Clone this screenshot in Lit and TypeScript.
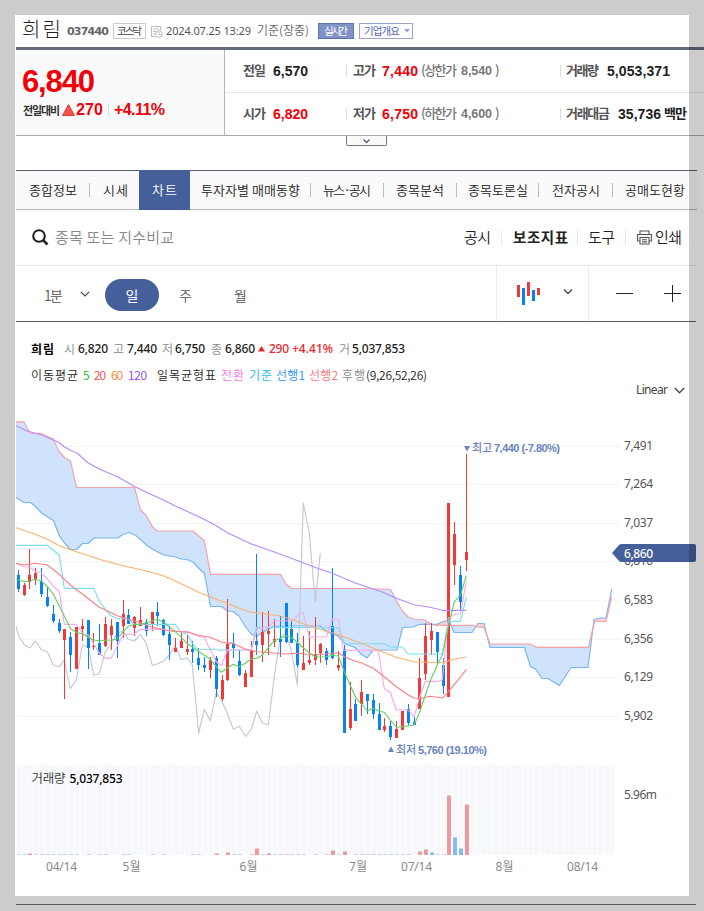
import { LitElement, html, svg, css } from "lit";
import { customElement } from "lit/decorators.js";

/** Text that spreads its letters over the width of its own box. */
@customElement("fit-text")
class FitText extends LitElement {
  static styles = css`
    :host { display: block; white-space: pre; min-width: 0; flex-shrink: 0; }
    .t { display: inline-block; }
  `;
  firstUpdated() {
    const span = this.renderRoot.querySelector(".t") as HTMLElement;
    const n = (this.textContent || "").length;
    if (n < 2) return;
    const natural = span.getBoundingClientRect().width;
    this.style.letterSpacing = (this.clientWidth - natural) / (n - 1) + "px";
  }
  render() {
    return html`<span class="t"><slot></slot></span>`;
  }
}

type Pt = [number, number];
/** Series are stored in thirds of a pixel; dx and dy move a run to its place on the page. */
const run = (dx: number, dy: number, s: string): Pt[] =>
  s.split(" ").map((p) => {
    const [x, y] = p.split(",").map(Number);
    return [(x + dx) / 3, (y + dy) / 3] as Pt;
  });
const pts = (a: Pt[]) => a.map((p) => p[0].toFixed(1) + "," + p[1].toFixed(1)).join(" ");
const px = (s: string): Pt[] => s.split(" ").map((p) => p.split(",").map(Number) as Pt);

const span2 = px(
  "16,421.8 24,421.8 30,433.5 41,433.5 53,439 59,451.5 65,458 70.5,461 76.5,487.5 134.5,487.5 140.5,510 146,515 152,526 157,531 193,531 204.5,541 210.5,574.3 280.5,574.3 286,584 291.5,588.5 361,588.5 390.5,589.3 396.5,601 402.5,611 408,617 414,619 425,620 431,624.5 436,625.3 474,625.3 476,627 484,627.5 490,644 530.5,644 536,647.3 588.5,647.3 594.5,621.5 606,621.5 611.7,597"
);
const span1 = px(
  "16,497.5 24,502.5 30.5,502.5 36,507 41.5,513 47,516.5 53.5,520.5 59.3,535.7 64.5,543 70.5,549.5 76.5,549.5 82.5,543.5 88,543.5 94,538 117.5,538 123,534.5 129,532.5 135,535 140,539 146.5,545 152,549 163.5,555 175.5,557 181,559 187,559.5 193,562 198.5,568 204.5,573.5 210.5,606.5 221.5,606.5 227.5,611 233,611.5 239,616 245,626 251,634 256.5,636.5 263,632 268,629.5 274,626.5 285,626 320,626 327,632 338,636 345,644 355,647.5 361,654 367,658 373,650.3 397,650 402.5,627.5 413.5,627 419.5,624.3 437,624.3 443,621.5 449,620 454,632.5 472,632.5 478,623.5 484,623.5 490,647.5 524.5,647.5 530.5,666.5 536,669.5 542,678.5 548,678.5 559.5,685.5 571,667.5 588,667.5 594,619.5 600,618 606,618 611.7,589"
);
const lagging = [
  ...run(0, 1560, "48,318 55,345 73,375 90,384 106,363 124,389 142,395 160,435 178,440 193,420 211,506 229,480 247,375 265,382 281,466 298,461 316,395 334,372 352,340 370,333 385,358 403,363 421,344 439,370 457,436 472,432 490,424 508,405 526,375 544,419 562,414 577,435 596,639 613,568 631,603 649,517 664,540 682,580 700,628"),
  ...run(690, 1440, "28,739 46,769 64,748 80,693 97,729 115,734 133,590 151,472 166,458 184,510 202,615 220,69 238,160 256,366 271,219"),
];
const ma5 = [
  ...run(0, 1560, "48,177 73,185 90,183 106,177 124,184 142,200 160,222 178,258 193,288 211,325 229,337 247,342 265,352 280,360 298,362 316,361 334,360 352,357 370,335 385,319 403,313 421,313 439,309 457,302 472,298 490,306 508,321 526,335 544,352 562,371 577,381 595,394 613,405 631,418 649,440 664,457 682,444 700,433"),
  ...run(690, 1440, "28,560 46,550 64,536 82,535 97,525 115,503 133,482 151,475 166,467 184,472 202,487 220,503 238,518 256,531 289,530 307,526 325,528 343,575 358,610 376,650 394,672 412,693 430,684 445,693 463,697 481,720 499,741 517,741 535,737 552,735 568,700 586,645 604,595 622,555 637,525 655,440 673,365 691,347 709,287"),
];
const ma20 = [
  ...run(0, 1560, "48,130 73,135 106,130 142,135 178,163 211,195 247,222 298,262 334,278 352,287 403,302 457,322 508,332 562,337 595,346 631,352 664,366 690,371"),
  ...run(690, 1440, "0,487 46,507 82,515 133,519 166,522 202,520 250,524 289,522 325,518 343,530 376,544 394,548 430,565 463,590 499,620 535,645 552,654 570,656 600,649 639,654 655,635 691,592 709,568"),
];
const ma60 = [
  ...run(0, 1560, "48,23 106,43 142,58 178,77 229,95 298,118 352,133 403,145 439,153 490,167 526,183 600,218 664,244"),
  ...run(690, 1440, "0,373 28,385 64,397 115,403 151,408 190,420 250,442 325,464 394,490 445,511 499,532 552,545 637,548 673,538 709,531"),
];
const ma120 = [
  ...run(0, 975, "48,302 80,317 124,330 161,345 178,353 193,365 211,376 231,384 265,414 298,432 352,455 403,484 439,502 490,525 526,543 600,577 645,600 682,623"),
  ...run(690, 1440, "0,162 64,192 133,216 184,235 258,263 307,280 376,309 457,336 499,355 552,374 600,382 637,391 709,391"),
];
const turning = [
  ...run(0, 1560, "48,130 73,140 90,142 106,153 124,160 142,176 160,199 178,214 193,313 229,313 247,340 265,345 280,370 298,400 316,415 334,415 352,378 370,343 403,343 421,328 490,328 508,334 562,334 600,350 613,352 631,390 649,425 664,437 682,392 690,390"),
  ...run(690, 1440, "64,510 82,445 115,442 133,422 190,422 205,405 220,398 238,471 289,471 307,417 325,417 340,511 445,511 463,626 481,637 499,690 535,690 552,711 568,655 586,604 625,604 637,600 655,415 673,403 691,401 709,305"),
];
const base = [
  ...run(0, 1560, "48,76 142,76 178,106 193,205 281,205 298,243 316,268 334,288 352,295 385,297 403,313 526,313 544,340 562,342 577,370 595,389 640,387 660,391 680,389"),
  ...run(690, 1440, "0,510 64,510 79,442 325,443 343,491 463,491 481,501 517,501 535,522 637,522 655,424 691,424 709,351"),
];

/** high, body top, body bottom, low, colour */
const candleText =
  "1710,1725,1767,1776,b 1750,1755,1785,1788,r 1648,1725,1746,1767,r 1704,1719,1740,1756,r 1704,1743,1782,1791,b 1761,1791,1818,1822,b 1816,1842,1863,1868,b 1857,1870,1893,1899,b 1887,1887,1920,2097,r 1897,1911,1965,2016,b 1881,1881,2007,2007,r 1857,1878,1887,1923,r 1860,1860,1944,2007,b 1899,1938,1941,1949,r 1872,1929,1965,1965,b 1852,1872,1938,1940,r 1857,1878,1905,1950,r 1866,1866,1923,1974,b 1801,1842,1878,1914,r 1827,1845,1872,1872,b 1848,1851,1884,1908,r 1821,1860,1878,1878,r 1857,1866,1893,1908,b 1836,1836,1872,1893,r 1806,1836,1848,1878,b 1857,1860,1905,1908,b 1878,1902,1935,1980,b 1914,1944,1956,1956,r 1893,1923,1944,1944,r 1902,1947,1956,1965,r 1923,1947,1956,1990,b 1944,1974,1995,2010,b 1971,1995,2004,2016,b 1971,1980,2010,2035,r 1968,1974,2067,2092,b 2025,2040,2097,2102,r 1797,1932,2040,2042,r 1899,1929,1944,1974,b 1950,1983,2025,2027,b " +
  "2010,2019,2061,2061,r 1924,1953,2031,2031,r 1663,1923,1935,1965,b 1837,1896,1935,1985,r 1833,1893,1902,1965,r 1857,1917,1926,1940,r 1848,1917,1926,1970,b 1809,1809,1926,1928,b 1863,1887,1929,1929,b 1899,1929,1995,2000,b 1908,1989,2010,2010,r 1893,1980,1989,1995,r 1851,1962,1980,1995,r 1929,1932,1959,1989,r 1944,1953,1980,1995,b 1704,1878,1974,1976,b 1953,1995,2004,2012,r 1935,1947,2199,2199,b 2046,2127,2184,2190,r 2097,2112,2163,2163,b 2040,2076,2112,2148,r 2082,2082,2103,2142,b 2082,2100,2142,2158,b 2108,2142,2190,2190,b 2154,2178,2190,2196,r 2164,2178,2211,2220,b 2164,2187,2214,2214,r 2132,2133,2190,2190,r 2112,2127,2169,2174,b 2144,2166,2175,2175,b 1974,2034,2127,2127,r 1869,1908,2022,2040,r 1869,1893,1920,1965,r 1896,1896,1956,1995,b 1974,1995,2058,2082,b 1509,1509,2091,2091,r 1566,1602,1695,1755,r 1698,1725,1806,1830,b 1362,1656,1680,1713,r";
const candles = candleText.split(" ").map((c) => {
  const v = c.split(",");
  return { v: v.slice(0, 4).map((n) => Math.round(+n / 3)), up: v[4] === "r" };
});
const col = (i: number) => 18 + Math.floor(i * 5.82 + 0.3);

/** index, direction, height */
const volumes =
  "0b1 1b1 2r2 3b1 4r1 5r1 6b1 7b1 8r1 9b1 10b1 12r1 14r1 15b1 18r1 19b1 23r1 25r1 30r1 31b1 34r2 36r3 37b1 38b1 40r1 41r7 42b1 43r2 44b1 45r1 46r1 47b1 48r1 49r1 51r1 53r1 54r5 55b1 56r4 58b1 59r1 60b1 61r1 62r1 63b1 64b1 65r1 66r1 67b1 69r4 70r6 71b3 72b1 73b1 74r60 75b18 76b7 77r51"
    .split(" ")
    .map((s) => {
      const m = s.match(/(\d+)([rb])(\d+)/)!;
      return { i: +m[1], up: m[2] === "r", h: +m[3] };
    });

const prices: [string, number][] = [
  ["7,491", 446], ["7,264", 484], ["7,037", 523], ["6,810", 561],
  ["6,583", 600], ["6,356", 639], ["6,129", 677], ["5,902", 716],
];
const dates: [string, number, number][] = [
  ["04/14", 46, 31], ["5월", 122.5, 18], ["6월", 239.5, 18], ["7월", 349, 18],
  ["07/14", 401, 31], ["8월", 495.5, 18], ["08/14", 567, 31],
];

@customElement("stock-chart")
class StockChart extends LitElement {
  static styles = css`
    :host { display: block; }
    svg { display: block; font-family: "Noto Sans", "Noto Sans CJK KR", sans-serif; font-size: 12px; }
    .crisp { shape-rendering: crispEdges; }
    .grid { fill: #f2f4f5; }
    .line { fill: none; stroke-width: 1.15; stroke-linejoin: round; }
    .up { fill: #ee3a3a; }
    .down { fill: #0b7ff5; }
    .vup { fill: #f2989d; }
    .vdown { fill: #82bcf8; }
    .cap-up { fill: #f5c6cb; }
    .cap-down { fill: #bcdcf8; }
    .cloud-b { fill: #cfe3fc; }
    .cloud-r { fill: #fbd0d0; }
    .s1 { stroke: #76b6f2; }
    .s2 { stroke: #f6a0a8; }
    .lag { stroke: #c5c7d2; }
    .g { stroke: #62d262; }
    .r { stroke: #fb8084; }
    .o { stroke: #f8b26c; }
    .p { stroke: #b98aff; }
    .t { stroke: #f9abee; }
    .k { stroke: #7cdcf1; }
    .price { fill: #555; }
    .date { fill: #8a8a8a; }
    .mark { fill: #6a84bd; font: bold 11px "Liberation Sans", "Noto Sans CJK KR", sans-serif; }
    .mark-kr { fill: #6a84bd; font: 500 11px "Noto Sans CJK KR", sans-serif; }
    .arrow { fill: #6a84bd; }
    .tag { fill: #455f9b; }
    .tag-text { fill: #fff; font-weight: 500; }
    .stripe { fill: #f6f8fc; }
    .vol-bg { fill: #fafbfd; }
    .vol-name { fill: #333; font-family: "Noto Sans CJK KR", sans-serif; font-weight: 350; font-size: 12.5px; }
    .vol-num { fill: #000; font-weight: 500; }
  `;
  render() {
    const line = (a: Pt[], c: string) => svg`<polyline class="line ${c}" points=${pts(a)} />`;
    const band = pts([...span2, ...[...span1].reverse()]);
    return html`<svg width="680" height="480" viewBox="16 400 680 480">
      <defs>
        <clipPath id="over"><polygon points="16,400 ${pts(span2)} 612,400" /></clipPath>
        <clipPath id="under"><polygon points="16,760 ${pts(span2)} 612,760" /></clipPath>
      </defs>
      ${prices.map(([, y]) => svg`<rect class="grid crisp" x="17" y=${y} width="603" height="1" />`)}
      <polygon class="cloud-b" points=${band} clip-path="url(#under)" />
      <polygon class="cloud-r" points=${band} clip-path="url(#over)" />
      ${line(lagging, "lag")} ${line(span1, "s1")} ${line(span2, "s2")}
      ${candles.map(({ v, up }, i) => {
        const x = col(i);
        const c = "crisp " + (up ? "up" : "down");
        return svg`<rect class=${c} x=${x} y=${v[0]} width="1" height=${v[3] - v[0]} />
          <rect class=${c} x=${x - 1} y=${v[1]} width="3" height=${Math.max(1, v[2] - v[1])} />`;
      })}
      ${line(base, "k")} ${line(turning, "t")} ${line(ma120, "p")} ${line(ma60, "o")}
      ${line(ma20, "r")} ${line(ma5, "g")}
      ${prices.map(([t, y]) => svg`<text class="price" x="624" y=${y + 4} textLength="29">${t}</text>`)}

      <path class="arrow" d="M464 446h6l-3 5.500z" />
      <text class="mark-kr" x="472" y="452" textLength="20">최고</text>
      <text class="mark" x="494" y="452" textLength="66">7,440 (-7.80%)</text>
      <path class="arrow" d="M388 752h6l-3-5.500z" />
      <text class="mark-kr" x="396" y="754" textLength="20">최저</text>
      <text class="mark" x="418" y="754" textLength="69">5,760 (19.10%)</text>

      <path class="tag" d="M612 553l7-8q1-1 3-1h72q2 0 2 2v14q0 2-2 2h-72q-2 0-3-1z" />
      <text class="tag-text" x="624" y="557.500" textLength="29">6,860</text>

      <rect class="vol-bg crisp" x="17" y="765" width="598" height="90" />
      ${Array.from({ length: 103 }, (_, i) => svg`<rect class="stripe crisp" x=${col(i) - 1} y="765" width="4" height="90" />`)}
      ${volumes.map(
        ({ i, up, h }) => svg`
        <rect class="crisp ${up ? "vup" : "vdown"}" x=${col(i) - 1} y=${855 - h} width="4" height=${h} />
        <rect class="crisp ${up ? "cap-up" : "cap-down"}" x=${col(i) - 1} y=${855 - h} width="4" height="1" />`
      )}
      <text class="vol-name" x="31.500" y="783" textLength="34">거래량</text>
      <text class="vol-num" x="69.500" y="783" textLength="53">5,037,853</text>
      <text class="price" x="624" y="799" textLength="33">5.96m</text>
      ${dates.map(([t, x, w]) => svg`<text class="date" x=${x} y="871" textLength=${w}>${t}</text>`)}
    </svg>`;
  }
}

const chevron = (w: number, h: number) =>
  html`<svg width=${w} height=${h} viewBox="0 0 10 6"><path d="M.8 .8L5 5L9.200 .8" fill="none" stroke="#444" stroke-width="1.200" /></svg>`;

@customElement("app-root")
class AppRoot extends LitElement {
  static styles = css`
    :host {
      display: block; position: relative; width: 704px; height: 911px; overflow: hidden;
      background: #fff; box-sizing: border-box; padding: 15px 0 0 16px;
      font-family: "Noto Sans CJK KR", sans-serif; font-size: 13px; color: #222;
    }
    * { box-sizing: border-box; }
    svg { display: block; flex-shrink: 0; }
    .shade { position: absolute; inset: 0; border: 15px solid rgba(0, 0, 0, 0.2); pointer-events: none; }
    .num { font-family: "Liberation Sans", sans-serif; font-weight: bold; }
    .red { color: #f00008; }
    .th { font-weight: 350; }
    .bar { flex: none; width: 1px; background: #ddd; height: 12px; }

    .head { display: grid; height: 32px; align-items: center; margin-left: 6px;
      grid-template-columns: 39px 6px 42px 4px 33px 5px 12px 3px 85px 6px 52px 9px 36px 5px 54px; }
    .name { font-size: 20px; font-weight: 300; line-height: 28px; margin-top: -4px; }
    .code { font: bold 11px "DejaVu Sans", sans-serif; color: #666; }
    .chip { height: 16px; border: 1px solid #ccc; font-size: 10.5px; line-height: 13px; padding: 0 3px; color: #444; }
    .date { font: 11px/14px "Noto Sans", sans-serif; color: #555; }
    .basis { font-size: 12px; line-height: 16px; color: #666; font-weight: 350; margin-top: -2px; }
    .live { background: #8192c6; border-color: #5c70ae; color: #fff; padding: 0 5px; }
    .about { border-color: #9aa6d0; color: #5468ae; display: flex; align-items: center; padding: 0 4px; background: #fbfcff; }
    .about fit-text { width: 36px; margin-right: 4px; line-height: 14px; margin-top: -1px; }

    .quote { width: 688px; height: 89px; border-top: 3px solid #666b79; border-bottom: 1px solid #aaa; display: flex; }
    .now { width: 209px; background: #fafafa; border-right: 1px solid #b5b5b8; padding: 15px 0 0 6px; }
    .big { font-size: 31px; line-height: 34px; width: 73px; }
    .diff { display: grid; align-items: center; height: 21px;
      grid-template-columns: 38px 2px 12px 2px 27px 5px 1px 5px 51px; }
    .diff .lab { font-size: 11px; color: #333; margin-left: 1px; }
    .diff .num { font-size: 16px; }
    .cells { flex: 1; }
    .line { display: grid; height: 42px; align-items: center; padding-left: 18px; font-size: 14px; }
    .line + .line { height: 43px; border-top: 1px solid #e6e6e6; }
    .lab { font-size: 13px; color: #555; font-weight: 700; line-height: 18px; }
    .line .lab { margin: -2px -1px 0 0; }
    .unit { color: #222; }
    .lim { color: #777; font-weight: 500; font-size: 13px; line-height: 18px; margin-top: -2px; }
    .close { margin-left: -2px; }
    .limn { color: #777; font-size: 12.5px; }
    .l1 { grid-template-columns: 22px 8px 35px 38px 1px 6px 22px 7px 36px 3px 36px 4px 31px 5px 5px 58px 1px 5px 32px 9px 63px; }
    .l2 { grid-template-columns: 22px 8px 35px 38px 1px 6px 22px 7px 36px 3px 36px 4px 31px 5px 5px 58px 1px 5px 43px 9px 43px 3px 22px; }
    .more { margin-left: 330px; width: 41px; height: 10px; border: 1px solid #777; border-top: 0; border-radius: 0 0 2px 2px; background: #fafafa; display: flex; justify-content: center; padding-top: 3px; }

    .tabs { margin-top: 24px; width: 681px; height: 40px; border-top: 1px solid #59606e; border-bottom: 1px solid #bbb; background: #fafafa; display: flex; align-items: center; padding-left: 13px; }
    .tabs fit-text { line-height: 18px; margin-top: -1px; font-weight: 350; }
    .tabs .bar { background: #bbb; height: 14px; }
    .on { background: #455f9b; color: #fff; width: 51px; height: 40px; display: flex; align-items: center; padding-left: 13px; margin-left: 11px; flex: none; }
    .w2 { width: 25px; } .w4 { width: 48px; } .w5 { width: 60px; } .w9 { width: 99px; }
    .g9 { margin-left: 9px; } .g10 { margin-left: 10px; } .g11 { margin-left: 11px; } .g12 { margin-left: 12px; } .g13 { margin-left: 13px; }

    .search { width: 680px; height: 56px; border-bottom: 1px solid #e8e8e8; display: flex; align-items: center; font-size: 15px; padding-left: 16px; }
    .search fit-text { line-height: 20px; margin-top: -1px; }
    .hint { width: 119px; margin-left: 6px; color: #888; font-weight: 350; }
    .tools { display: flex; align-items: center; margin-left: 290px; }
    .tools .bar { background: #e6e9ee; height: 16px; }
    .tools fit-text { width: 27px; }
    .tools .strong { width: 55px; font-weight: 700; font-size: 14.5px; }
    .print { margin-left: 3px; }

    .toolbar { width: 680px; height: 56px; border-bottom: 1px solid #59606e; display: flex; align-items: center; font-size: 14px; color: #555; padding-left: 28px; }
    .sep { flex: none; width: 1px; align-self: stretch; background: #e9edf3; }
    .toolbar .th { margin-top: 2px; line-height: 20px; flex: none; width: 13px; white-space: nowrap; }
    .toolbar .minute { width: 19px; margin-right: 17px; }
    .pill { flex: none; width: 54px; height: 32px; border-radius: 16px; background: #455f9b; color: #fff; text-align: center; line-height: 32px; margin: 3px 20px 0 15px; }
    .toolbar .month { margin: 2px 249px 0 42px; }

    .legend { display: grid; align-items: center; padding-left: 15px; height: 27px; font-size: 12px; line-height: 18px; }
    .lg1 { margin-top: 13px; height: 28px;
      grid-template-columns: 23px 10px 11px 3px 30px 5px 11px 3px 30px 5px 11px 2px 30px 6px 11px 3px 30px 3px 7px 4px 20px 3px 41px 6px 11px 2px 53px; }
    .lg2 { height: 26px; margin-top: -1px; font-weight: 350;
      grid-template-columns: 47px 5px 6px 5px 12px 5px 12px 5px 19px 10px 59px 5px 23px 5px 23px 4px 29px 4px 29px 4px 23px 1px 61px; }
    .b { font-weight: 700; color: #000; }
    .n { font-family: "Noto Sans", sans-serif; font-weight: 500; color: #222; }
    .legend .r { color: #e8262c; }
    .gray { color: #888; }
    .c5 { color: #00b815; } .c20 { color: #f8403f; } .c60 { color: #f58220; } .c120 { color: #8a3dfa; }
    .ct { color: #fa76e6; } .ck { color: #20b8e8; } .cs1 { color: #1f8df5; } .cs2 { color: #fa6d78; }
    .scale { display: flex; align-items: center; margin: -8px 0 0 620px; height: 20px; color: #444; font: 12px/18px "Noto Sans", sans-serif; }
    .scale fit-text { width: 32px; margin-right: 6px; }
    .foot { width: 680px; height: 1px; background: #6a6e7a; margin-top: 24px; }
  `;

  render() {
    const _ = html`<i></i>`;
    const bar = html`<span class="bar"></span>`;
    const row = (c: string, a: string, b: string, lim: string, limn: string, k: string, kn: string, first: string, isRed: boolean, unit = "") => html`
      <div class="line ${c}">
        <fit-text class="lab">${first}</fit-text>${_}<fit-text class="num ${isRed ? "red" : ""}">${a}</fit-text>${_}${bar}${_}
        <fit-text class="lab">${c === "l1" ? "고가" : "저가"}</fit-text>${_}<fit-text class="num red">${b}</fit-text>${_}
        <fit-text class="lim">(${lim}</fit-text>${_}<fit-text class="num limn">${limn}</fit-text>${_}<span class="lim close">)</span>${_}${bar}${_}
        <fit-text class="lab">${k}</fit-text>${_}<fit-text class="num">${kn}</fit-text>
        ${unit ? html`${_}<fit-text class="lab unit">${unit}</fit-text>` : ""}
      </div>`;
    return html`
      <div class="head">
        <fit-text class="name">희림</fit-text>${_}
        <fit-text class="code">037440</fit-text>${_}
        <div class="chip"><fit-text>코스닥</fit-text></div>${_}
        <svg width="12" height="13" viewBox="0 0 12 13" fill="none" stroke="#bbb"><path d="M9.500 5V1.500H.5v10h4M2 4h6M2 6.500h3M2 9h2" /><circle cx="8" cy="9" r="3.300" fill="#fff" /><path d="M8 7v2.500h2" /></svg>${_}
        <fit-text class="date">2024.07.25 13:29</fit-text>${_}
        <fit-text class="basis">기준(장중)</fit-text>${_}
        <div class="chip live"><fit-text>실시간</fit-text></div>${_}
        <div class="chip about"><fit-text>기업개요</fit-text><svg width="6" height="4" viewBox="0 0 6 4"><path d="M0 0h6L3 3.500z" fill="#8fa4d8" /></svg></div>
      </div>
      <div class="quote">
        <div class="now">
          <fit-text class="num red big">6,840</fit-text>
          <div class="diff">
            <fit-text class="lab">전일대비</fit-text>${_}
            <svg width="13" height="12" viewBox="0 0 13 12"><path d="M6.500 .5L12.500 11.500H.5z" fill="#f4544e" stroke="#d8201c" stroke-width=".8" /></svg>${_}
            <fit-text class="num red">270</fit-text>${_}${bar}${_}
            <fit-text class="num red">+4.11%</fit-text>
          </div>
        </div>
        <div class="cells">
          ${row("l1", "6,570", "7,440", "상한가", "8,540", "거래량", "5,053,371", "전일", false)}
          ${row("l2", "6,820", "6,750", "하한가", "4,600", "거래대금", "35,736", "시가", true, "백만")}
        </div>
      </div>
      <div class="more"><svg width="7" height="5" viewBox="0 0 7 5"><path d="M.5 .5L3.500 3.500L6.500 .5" fill="none" stroke="#4a5a80" stroke-width="1.300" /></svg></div>

      <nav class="tabs">
        <fit-text class="w4">종합정보</fit-text><span class="bar g12"></span>
        <fit-text class="w2 g13">시세</fit-text>
        <div class="on"><fit-text class="w2">차트</fit-text></div>
        <fit-text class="w9 g11">투자자별 매매동향</fit-text><span class="bar g10"></span>
        <fit-text class="w4 g12">뉴스·공시</fit-text><span class="bar g12"></span>
        <fit-text class="w4 g12">종목분석</fit-text><span class="bar g12"></span>
        <fit-text class="w5 g11">종목토론실</fit-text><span class="bar g10"></span>
        <fit-text class="w4 g13">전자공시</fit-text><span class="bar g12"></span>
        <fit-text class="w5 g12">공매도현황</fit-text>
      </nav>

      <div class="search">
        <svg width="17" height="17" viewBox="0 0 17 17" fill="none" stroke="#1c1c1e"><circle cx="7" cy="7" r="5.800" stroke-width="2" /><path d="M11.300 11.300L15.500 15.500" stroke-width="2.500" /></svg>
        <fit-text class="hint">종목 또는 지수비교</fit-text>
        <div class="tools">
          <fit-text class="th">공시</fit-text><span class="bar g10"></span>
          <fit-text class="g11 strong">보조지표</fit-text><span class="bar g9"></span>
          <fit-text class="g10 th">도구</fit-text><span class="bar g10"></span>
          <svg class="g11" width="15" height="15" viewBox="0 0 15 15" fill="none" stroke="#50545e" stroke-width="1.100"><path d="M3 4V1h9v3M3 11H.6V4.500h13.800V11H12M3 7.500h9v6.500H3zM5 9.800h5M5 11.900h5" /></svg>
          <fit-text class="th print">인쇄</fit-text>
        </div>
      </div>

      <div class="toolbar">
        <fit-text class="th minute">1분</fit-text>${chevron(10, 6)}
        <div class="pill">일</div>
        <span class="th">주</span>
        <span class="th month">월</span>
        <span class="sep"></span>
        <svg width="91" height="55" viewBox="497 266 91 55" shape-rendering="crispEdges">
          <path fill="#ee3a3a" d="M517 285h3v12h-3zM527 282h3v14h-3zM537 288h3v7h-3z" />
          <path fill="#0b7ff5" d="M522 288h3v17h-3zM532 290h3v11h-3z" />
          <path d="M564 289.500l4 4l4-4" fill="none" stroke="#444" stroke-width="1.300" shape-rendering="auto" />
        </svg>
        <span class="sep"></span>
        <svg width="107" height="55" viewBox="589 266 107 55" shape-rendering="crispEdges"><path fill="#222" d="M616 293h17v1h-17zM664 293h17v1h-17zM672 285h1v17h-1z" /></svg>
      </div>

      <div class="legend lg1">
        <fit-text class="b">희림</fit-text>${_}<span class="gray th">시</span>${_}<fit-text class="n">6,820</fit-text>${_}
        <span class="gray th">고</span>${_}<fit-text class="n">7,440</fit-text>${_}
        <span class="gray th">저</span>${_}<fit-text class="n">6,750</fit-text>${_}
        <span class="gray th">종</span>${_}<fit-text class="n">6,860</fit-text>${_}
        <svg width="7" height="6" viewBox="0 0 7 6"><path d="M0 5.500h7L3.500 0z" fill="#e8262c" /></svg>${_}
        <fit-text class="n r">290</fit-text>${_}<fit-text class="n r">+4.41%</fit-text>${_}
        <span class="gray th">거</span>${_}<fit-text class="n">5,037,853</fit-text>
      </div>
      <div class="legend lg2">
        <fit-text>이동평균</fit-text>${_}<span class="c5">5</span>${_}<fit-text class="c20">20</fit-text>${_}<fit-text class="c60">60</fit-text>${_}<fit-text class="c120">120</fit-text>${_}
        <fit-text>일목균형표</fit-text>${_}<fit-text class="ct">전환</fit-text>${_}<fit-text class="ck">기준</fit-text>${_}<fit-text class="cs1">선행1</fit-text>${_}<fit-text class="cs2">선행2</fit-text>${_}<fit-text class="gray">후행</fit-text>${_}<fit-text>(9,26,52,26)</fit-text>
      </div>
      <div class="scale"><fit-text>Linear</fit-text>${chevron(11, 7)}</div>
      <stock-chart></stock-chart>
      <div class="foot"></div>
      <div class="shade"></div>
    `;
  }
}
